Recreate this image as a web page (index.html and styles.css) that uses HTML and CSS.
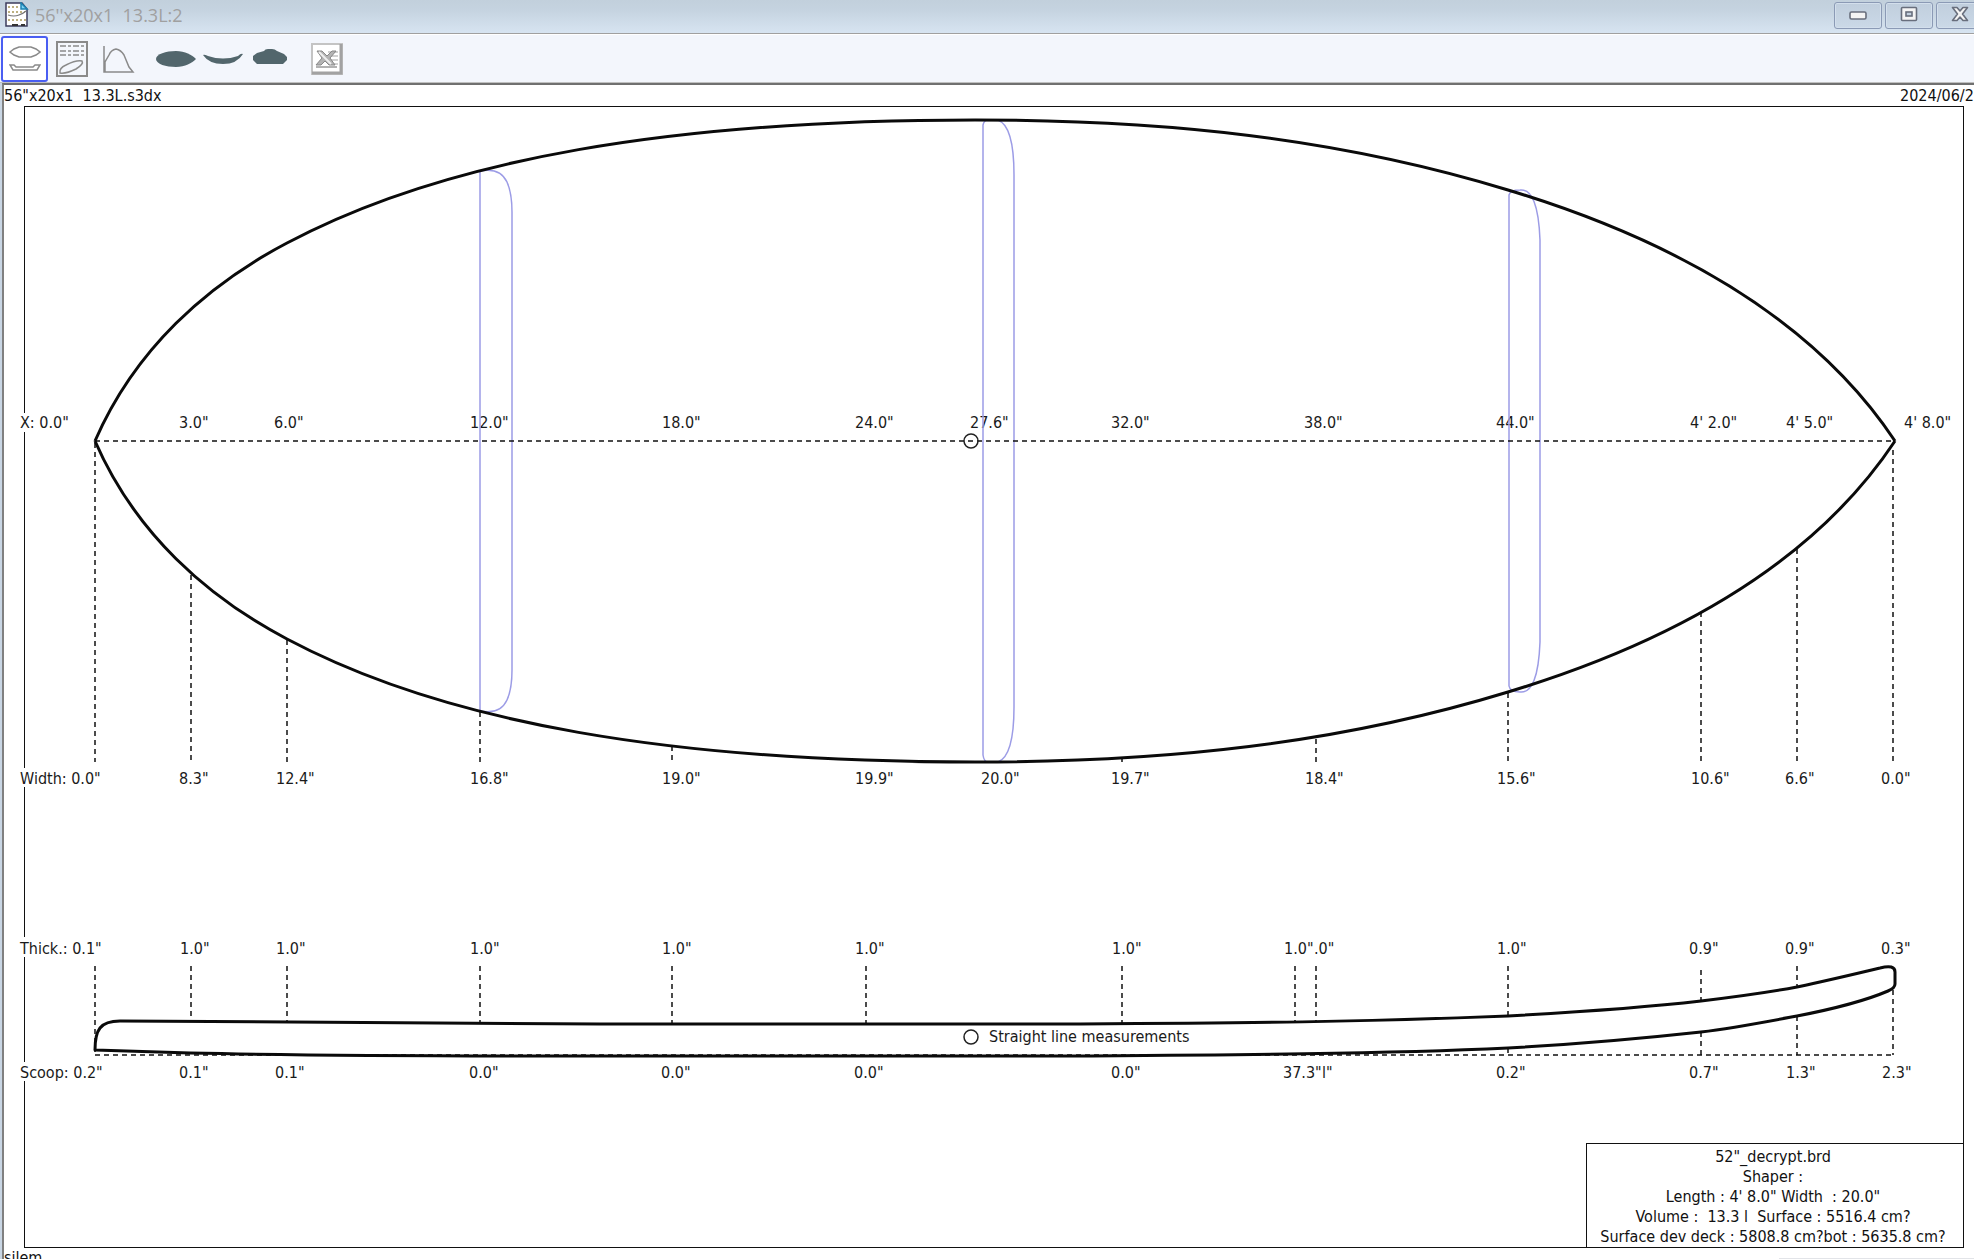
FILE: index.html
```html
<!DOCTYPE html>
<html lang="en">
<head>
<meta charset="utf-8">
<title>56''x20x1 13.3L:2</title>
<link rel="stylesheet" href="styles.css">
</head>
<body>
<header class="titlebar">
  <svg class="doc-icon" width="24" height="26" viewBox="0 0 24 26" aria-hidden="true">
    <path d="M1 1H17L22 7V24H1Z" fill="#fff" stroke="#3c3c5c" stroke-width="1.5"/>
    <path d="M16 1V7H22Z" fill="#7fd4f4" stroke="#1d84b4" stroke-width="1.5"/>
    <path d="M3 5H13M3 10H20M3 18H21" fill="none" stroke="#a89858" stroke-width="1.3" stroke-dasharray="2 2"/>
    <path d="M3 13Q9 15 14 13T21 9" fill="none" stroke="#777" stroke-width="1.2"/>
    <path d="M7 23H13M16 23H20" stroke="#333" stroke-width="2"/>
  </svg>
  <h1 class="title">56''x20x1&nbsp; 13.3L:2</h1>
  <div class="window-buttons">
    <button class="winbtn" aria-label="Minimize"><svg width="18" height="16" viewBox="0 0 18 16"><rect x="1" y="6" width="16" height="7" rx="1.5" fill="#f4f4f4" stroke="#686e7c" stroke-width="1.6"/></svg></button>
    <button class="winbtn" aria-label="Restore"><svg width="18" height="16" viewBox="0 0 18 16"><rect x="1.500" y="1.500" width="15" height="13" rx="1" fill="#f4f4f4" stroke="#686e7c" stroke-width="1.6"/><rect x="6" y="6" width="6" height="4" fill="#c3d0df" stroke="#686e7c" stroke-width="1.6"/></svg></button>
    <button class="winbtn" aria-label="Close"><svg width="18" height="16" viewBox="0 0 18 16"><path d="M1.500 1.500H6L9 5L12 1.500H16.500L11.500 8L16.500 14.500H12L9 11L6 14.500H1.500L6.500 8Z" fill="#f4f4f4" stroke="#686e7c" stroke-width="1.6" stroke-linejoin="round"/></svg></button>
  </div>
</header>

<nav class="toolbar" aria-label="Views">
  <button class="tool selected" aria-label="Outline and profile"><svg width="32" height="28" viewBox="0 0 32 28"><path d="M1 7L5 4L10 2H22L27 4L31 7L27 10L22 12H10L5 10ZM1 20H5L7 22H24L26 20H31L28 25H4Z"/></svg></button>
  <button class="tool" aria-label="Report"><svg width="32" height="36" viewBox="0 0 32 36"><path d="M1 1H31V35H1Z" stroke-width="2"/><path d="M4 5H29M4 10H29M4 14H28" stroke-dasharray="6 2 3 2"/><path d="M4 32Q3 27 10 24Q20 19 26 20Q28 23 20 28Q10 33 4 32Z"/></svg></button>
  <button class="tool" aria-label="Curve"><svg width="32" height="28" viewBox="0 0 32 28"><path d="M1 1V27H30L26 22L21 10Q18 5 13 4Q8 5 6 10L2 17V27"/></svg></button>
  <span class="gap"></span>
  <button class="tool" aria-label="Outline"><svg width="40" height="18" viewBox="0 0 40 18"><path class="solid" d="M0 9C0 4 10 1 20 1C29 1 36 5 40 9C36 13 29 17 20 17C10 17 0 14 0 9Z"/></svg></button>
  <button class="tool" aria-label="Rocker"><svg width="40" height="24" viewBox="0 0 40 24"><path class="solid" d="M0 8Q1 7 5 9Q20 14 35 9Q38 6 40 7Q34 17 20 17Q6 17 0 8Z"/></svg></button>
  <button class="tool" aria-label="Slice"><svg width="36" height="24" viewBox="0 0 36 24"><path class="solid" d="M1 9L5 6L12 4Q13 2 16 2H20Q23 2 25 4L32 7L35 10V13L31 17H5L1 13Z"/></svg></button>
  <span class="gap"></span>
  <button class="tool" aria-label="Export to spreadsheet"><svg width="32" height="32" viewBox="0 0 32 32"><path d="M1 1H31V31H1Z" fill="#fff" stroke="#c4c4c4" stroke-width="2"/><path d="M30 1V30H1" stroke="#a2a2a2" stroke-width="3"/><path d="M17 9H27M20 13H27M20 17H27M20 21H27" stroke="#c2c2c2"/><path d="M6 8H11L16 13L21 8H25L19 15L24 22H18L14 18L10 22H5L11 15Z" fill="#b4b4b4" stroke="#888" stroke-width="1"/><path d="M8 9L20 21" stroke="#eee" stroke-width="2"/><path d="M5 24H26" stroke="#999"/></svg></button>
</nav>

<main class="canvas">
  <div class="sheet-head"><span>56"x20x1&nbsp; 13.3L.s3dx</span><time class="date">2024/06/2</time></div>
  <section class="sheet">
    <svg class="drawing" viewBox="25 107 1938 1140" role="img" aria-label="Board outline and profile with measurements">
      <defs>
        <path id="half" d="M95 0C135 92 207 156 287 198C447 283 675 321 975 321C1165 321 1338 303 1508 251C1700 193 1824 107 1895 0"/>
      </defs>
      <g class="mask">
        <rect x="19" y="413" width="12" height="19"/>
        <rect x="19" y="768" width="12" height="19"/>
        <rect x="19" y="937" width="12" height="20"/>
        <rect x="19" y="1062" width="12" height="19"/>
      </g>
      <g class="labels">
        <text x="20" y="428">X: 0.0"</text><text x="179" y="428">3.0"</text><text x="274" y="428">6.0"</text><text x="470" y="428">12.0"</text><text x="662" y="428">18.0"</text><text x="855" y="428">24.0"</text><text x="970" y="428">27.6"</text><text x="1111" y="428">32.0"</text><text x="1304" y="428">38.0"</text><text x="1496" y="428">44.0"</text><text x="1690" y="428">4' 2.0"</text><text x="1786" y="428">4' 5.0"</text><text x="1904" y="428">4' 8.0"</text>
        <text x="20" y="784">Width: 0.0"</text><text x="179" y="784">8.3"</text><text x="276" y="784">12.4"</text><text x="470" y="784">16.8"</text><text x="662" y="784">19.0"</text><text x="855" y="784">19.9"</text><text x="981" y="784">20.0"</text><text x="1111" y="784">19.7"</text><text x="1305" y="784">18.4"</text><text x="1497" y="784">15.6"</text><text x="1691" y="784">10.6"</text><text x="1785" y="784">6.6"</text><text x="1881" y="784">0.0"</text>
        <text x="20" y="954">Thick.: 0.1"</text><text x="180" y="954">1.0"</text><text x="276" y="954">1.0"</text><text x="470" y="954">1.0"</text><text x="662" y="954">1.0"</text><text x="855" y="954">1.0"</text><text x="1112" y="954">1.0"</text><text x="1284" y="954">1.0"</text><text x="1314" y="954">.0"</text><text x="1497" y="954">1.0"</text><text x="1689" y="954">0.9"</text><text x="1785" y="954">0.9"</text><text x="1881" y="954">0.3"</text>
        <text x="20" y="1078">Scoop: 0.2"</text><text x="179" y="1078">0.1"</text><text x="275" y="1078">0.1"</text><text x="469" y="1078">0.0"</text><text x="661" y="1078">0.0"</text><text x="854" y="1078">0.0"</text><text x="1111" y="1078">0.0"</text><text x="1283" y="1078">37.3"</text><text x="1322" y="1078">l"</text><text x="1496" y="1078">0.2"</text><text x="1689" y="1078">0.7"</text><text x="1786" y="1078">1.3"</text><text x="1882" y="1078">2.3"</text>
        <text x="989" y="1042">Straight line measurements</text>
      </g>
      <g class="sections">
        <path d="M480 711V171Q500 167 507 182Q512 193 512 212V670Q512 689 507 700Q500 715 480 711"/>
        <path d="M983 755V125Q984 120 988 120H998Q1014 126 1014 175V707Q1014 756 998 762H988Q984 762 983 755"/>
        <path d="M1509 686V195Q1510 190 1520 190Q1538 188 1540 240V642Q1538 694 1520 692Q1510 692 1509 686"/>
      </g>
      <g class="guides">
        <path d="M95 441H1893M95 1055H1893"/>
        <path d="M95 443V762M191 575V762M287 640V762M480 712V762M672 746V762M1122 758V762M1316 739V762M1508 693V762M1701 612V762M1797 549V762M1893 450V762"/>
        <path d="M95 966V1055M191 966V1021M287 966V1022M480 966V1023M672 966V1024M866 966V1024M1122 966V1024M1295 966V1022M1316 966V1022M1508 966V1016M1701 970V1001M1797 966V987M1508 1048V1055M1701 1032V1055M1797 1016V1055M1893 990V1055"/>
      </g>
      <g class="board">
        <use href="#half" transform="translate(0 441)"/>
        <use href="#half" transform="translate(0 441) scale(1 -1)"/>
        <path d="M95 1050C95 1030 100 1021 120 1021C240 1022 380 1024 600 1024H1080C1250 1023 1360 1022 1508 1016C1580 1012 1640 1008 1701 1001C1734 997 1765 993 1797 987C1830 980 1855 974 1880 968Q1895 964 1895 972V984Q1895 988 1888 991C1860 1003 1828 1010 1797 1016C1765 1022 1734 1028 1701 1032C1637 1039 1580 1044 1508 1048C1380 1054 1220 1055 1080 1056H600C380 1056 280 1055 190 1053Z"/>
      </g>
      <g class="markers"><circle cx="971" cy="441" r="7"/><circle cx="971" cy="1037" r="7"/></g>
    </svg>
    <div class="info">
      <p>52"_decrypt.brd</p>
      <p>Shaper :</p>
      <p>Length : 4' 8.0" Width&nbsp; : 20.0"</p>
      <p>Volume :&nbsp; 13.3 l&nbsp; Surface : 5516.4 cm?</p>
      <p>Surface dev deck : 5808.8 cm?bot : 5635.8 cm?</p>
    </div>
  </section>
  <footer class="sheet-foot"><span>silem</span><span class="foot-rule"></span></footer>
</main>
</body>
</html>
```
FILE: styles.css
```css
* { box-sizing: border-box; }

body {
  margin: 0;
  height: 100vh;
  overflow: hidden;
  display: flex;
  flex-direction: column;
  background: #fff;
  color: #111;
  font: 16px/20px "DejaVu Sans Condensed", "DejaVu Sans", sans-serif;
  font-stretch: condensed;
}

.titlebar {
  flex: none;
  display: flex;
  align-items: center;
  height: 34px;
  padding: 0 0 3px 5px;
  overflow: hidden;
  background: linear-gradient(#c2d0dc, #c5d3e0 30%, #d7e4f1);
  border-bottom: 1px solid #a0a0a0;
}

.doc-icon { flex: none; }

.title {
  flex: 1;
  margin: 0 0 0 6px;
  color: #a0a0a0;
  font: 18px/24px "Open Sans", "Noto Sans", sans-serif;
  white-space: nowrap;
}

.window-buttons {
  display: flex;
  flex: none;
  gap: 3px;
  margin-right: -10px;
}

.winbtn {
  display: flex;
  align-items: center;
  justify-content: center;
  width: 48px;
  height: 27px;
  padding: 0 0 2px;
  background: linear-gradient(#c0cedd, #cbd9e7);
  border: 1px solid #8b9ab5;
  border-radius: 3px;
  box-shadow: inset 0 0 0 1px #d3dfec;
}

.toolbar {
  flex: none;
  display: flex;
  align-items: center;
  height: 49px;
  padding: 1px 1px 0;
  background: #f3f6fc;
  border-top: 1px solid #fff;
  border-bottom: 1px solid #c0c0c0;
}

.tool {
  display: flex;
  align-items: center;
  justify-content: center;
  width: 47px;
  height: 46px;
  padding: 0;
  background: none;
  border: 2px solid transparent;
  border-radius: 3px;
}

.tool.selected {
  background: #fff;
  border-color: #4a5ef2;
}

.tool svg { flex: none; fill: none; stroke: #8a8a8a; stroke-width: 1.5; }
.tool .solid { fill: #52666c; stroke: none; }
.gap { width: 10px; }

.canvas {
  flex: 1;
  min-height: 0;
  margin-left: 2px;
  border-top: 2px solid #707070;
  border-left: 2px solid #808080;
  box-shadow: -2px 0 0 #c9d6e4;
}

.sheet-head {
  display: flex;
  justify-content: space-between;
  height: 21px;
  padding-top: 1px;
  white-space: nowrap;
}

.date { width: 74px; }

.sheet {
  position: relative;
  margin: 0 10px 0 20px;
  border: 1px solid #111;
}

.drawing { display: block; width: 100%; height: auto; overflow: visible; }
.mask { fill: #fff; }
.labels { fill: #1a1a1a; }
.sections { fill: none; stroke: #9c9ce6; stroke-width: 1.5; }
.guides { fill: none; stroke: #111; stroke-width: 1.5; stroke-dasharray: 5 4; }
.board { fill: none; stroke: #0a0a0a; stroke-width: 3; stroke-linejoin: round; }
.markers { fill: none; stroke: #222; stroke-width: 1.5; }

.info {
  position: absolute;
  right: 0;
  bottom: 0;
  width: 377px;
  padding: 3px 4px 0 0;
  border: 1px solid #111;
  border-width: 1px 0 0 1px;
  text-align: center;
  white-space: nowrap;
}

.info p { margin: 0; }

.sheet-foot {
  display: flex;
  justify-content: space-between;
  height: 20px;
}

.foot-rule {
  width: 195px;
  height: 11px;
  border-bottom: 1px solid #e2e4e8;
}
```
